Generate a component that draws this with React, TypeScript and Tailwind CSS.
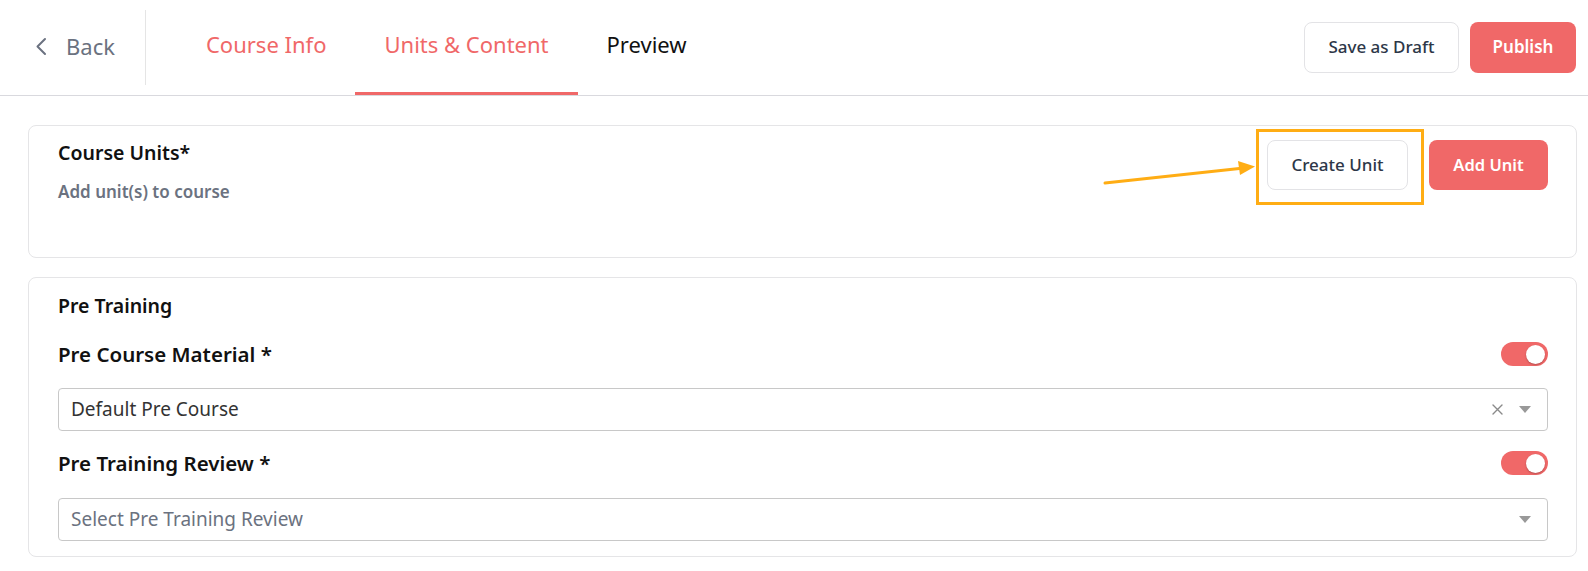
import React from "react";

const Toggle = () => (
    <div className="w-[47px] h-[24px] rounded-full bg-[#f06868] flex items-center justify-end pr-[3px]">
        <div className="w-[19px] h-[19px] rounded-full bg-white shadow-[0_1px_2px_rgba(0,0,0,0.25)]"></div>
    </div>
);

const Caret = () => (
    <svg width="12" height="7" viewBox="0 0 12 7">
        <path d="M0 0 L12 0 L6 7 Z" fill="#999999" />
    </svg>
);

export default function App() {
    return (
        <div className="w-[1588px] min-h-[571px] bg-white font-['Noto_Sans',sans-serif]">
            {/* Header */}
            <div className="h-[96px] flex items-stretch border-b border-[#d9d9de]">
                <div className="flex items-center pl-[35px] pr-[30px] pb-[3px] my-[10px] border-r border-[#e5e5e5]">
                    <svg width="12" height="19" viewBox="0 0 12 19" className="mr-[19px]">
                        <path d="M10 2 L2.5 9.5 L10 17" fill="none" stroke="#6b7280" strokeWidth="2" strokeLinecap="round" strokeLinejoin="round" />
                    </svg>
                    <span className="text-[22px] text-[#6b7280]">Back</span>
                </div>
                <div className="flex items-stretch ml-[31px]">
                    <div className="px-[29px] pb-[3px] flex items-center text-[22px] text-[#f06868] border-b-[3px] border-transparent">Course Info</div>
                    <div className="px-[29px] pb-[3px] flex items-center text-[22px] text-[#f06868] border-b-[3px] border-[#f06868]">Units &amp; Content</div>
                    <div className="px-[29px] pb-[3px] flex items-center text-[22px] text-[#111111] border-b-[3px] border-transparent">Preview</div>
                </div>
                <div className="ml-auto flex items-center gap-[11px] pr-[12px] pb-[1px]">
                    <button className="h-[51px] w-[155px] rounded-[8px] border border-[#e3e3e6] bg-white text-[17px] font-medium text-[#2d3748]">Save as Draft</button>
                    <button className="h-[51px] w-[106px] rounded-[8px] bg-[#f06868] text-[17px] font-semibold text-white">Publish</button>
                </div>
            </div>

            {/* Content */}
            <div className="px-[28px] pt-[29px] pr-[11px] flex flex-col gap-[19px]">
                {/* Course Units */}
                <div className="relative h-[133px] rounded-[8px] border border-[#e5e5e7] pl-[29px] pr-[28px] pt-[14px] flex justify-between">
                    <div>
                        <div className="text-[19.5px] leading-[26px] font-semibold text-[#111111]">Course Units*</div>
                        <div className="mt-[13px] text-[17px] font-semibold text-[#6b7280]">Add unit(s) to course</div>
                    </div>
                    <div className="flex gap-[21px] items-start">
                        <div className="relative">
                            <button className="h-[50px] w-[141px] rounded-[8px] border border-[#e3e3e6] bg-white text-[17px] font-medium text-[#2d3748]">Create Unit</button>
                            <div className="absolute -left-[11px] -top-[11px] -right-[16px] -bottom-[15px] border-[3px] border-[#ffad14]"></div>
                        </div>
                        <button className="h-[50px] w-[119px] rounded-[8px] bg-[#f06868] text-[16.5px] font-semibold text-white">Add Unit</button>
                    </div>
                    <svg className="absolute left-[1070px] top-[34px]" width="160" height="30" viewBox="0 0 160 30">
                        <line x1="6" y1="23" x2="145" y2="8" stroke="#ffad14" strokeWidth="3" strokeLinecap="round" />
                        <path d="M156 6.5 L139 1 L141 15 Z" fill="#ffad14" />
                    </svg>
                </div>

                {/* Pre Training */}
                <div className="rounded-[8px] border border-[#e5e5e7] pl-[29px] pr-[28px] pt-[15px] pb-[15px]">
                    <div className="text-[19.5px] leading-[26px] font-semibold text-[#111111]">Pre Training</div>
                    <div className="mt-[22px] flex items-center justify-between">
                        <div className="text-[20.5px] leading-[26px] font-semibold text-[#111111]">Pre Course Material *</div>
                        <Toggle />
                    </div>
                    <div className="mt-[21px] h-[43px] rounded-[4px] border border-[#c8c8c8] flex items-center pl-[12px] pr-[16px]">
                        <span className="text-[19px] text-[#333333]">Default Pre Course</span>
                        <svg className="ml-auto mr-[16px]" width="11" height="11" viewBox="0 0 11 11">
                            <path d="M1 1 L10 10 M10 1 L1 10" stroke="#8a8a8a" strokeWidth="1.4" strokeLinecap="round" />
                        </svg>
                        <Caret />
                    </div>
                    <div className="mt-[19px] flex items-center justify-between">
                        <div className="text-[20.5px] leading-[26px] font-semibold text-[#111111]">Pre Training Review *</div>
                        <Toggle />
                    </div>
                    <div className="mt-[22px] h-[43px] rounded-[4px] border border-[#c8c8c8] flex items-center pl-[12px] pr-[16px]">
                        <span className="text-[19px] text-[#6b7280]">Select Pre Training Review</span>
                        <span className="ml-auto"></span>
                        <Caret />
                    </div>
                </div>
            </div>
        </div>
    );
}
